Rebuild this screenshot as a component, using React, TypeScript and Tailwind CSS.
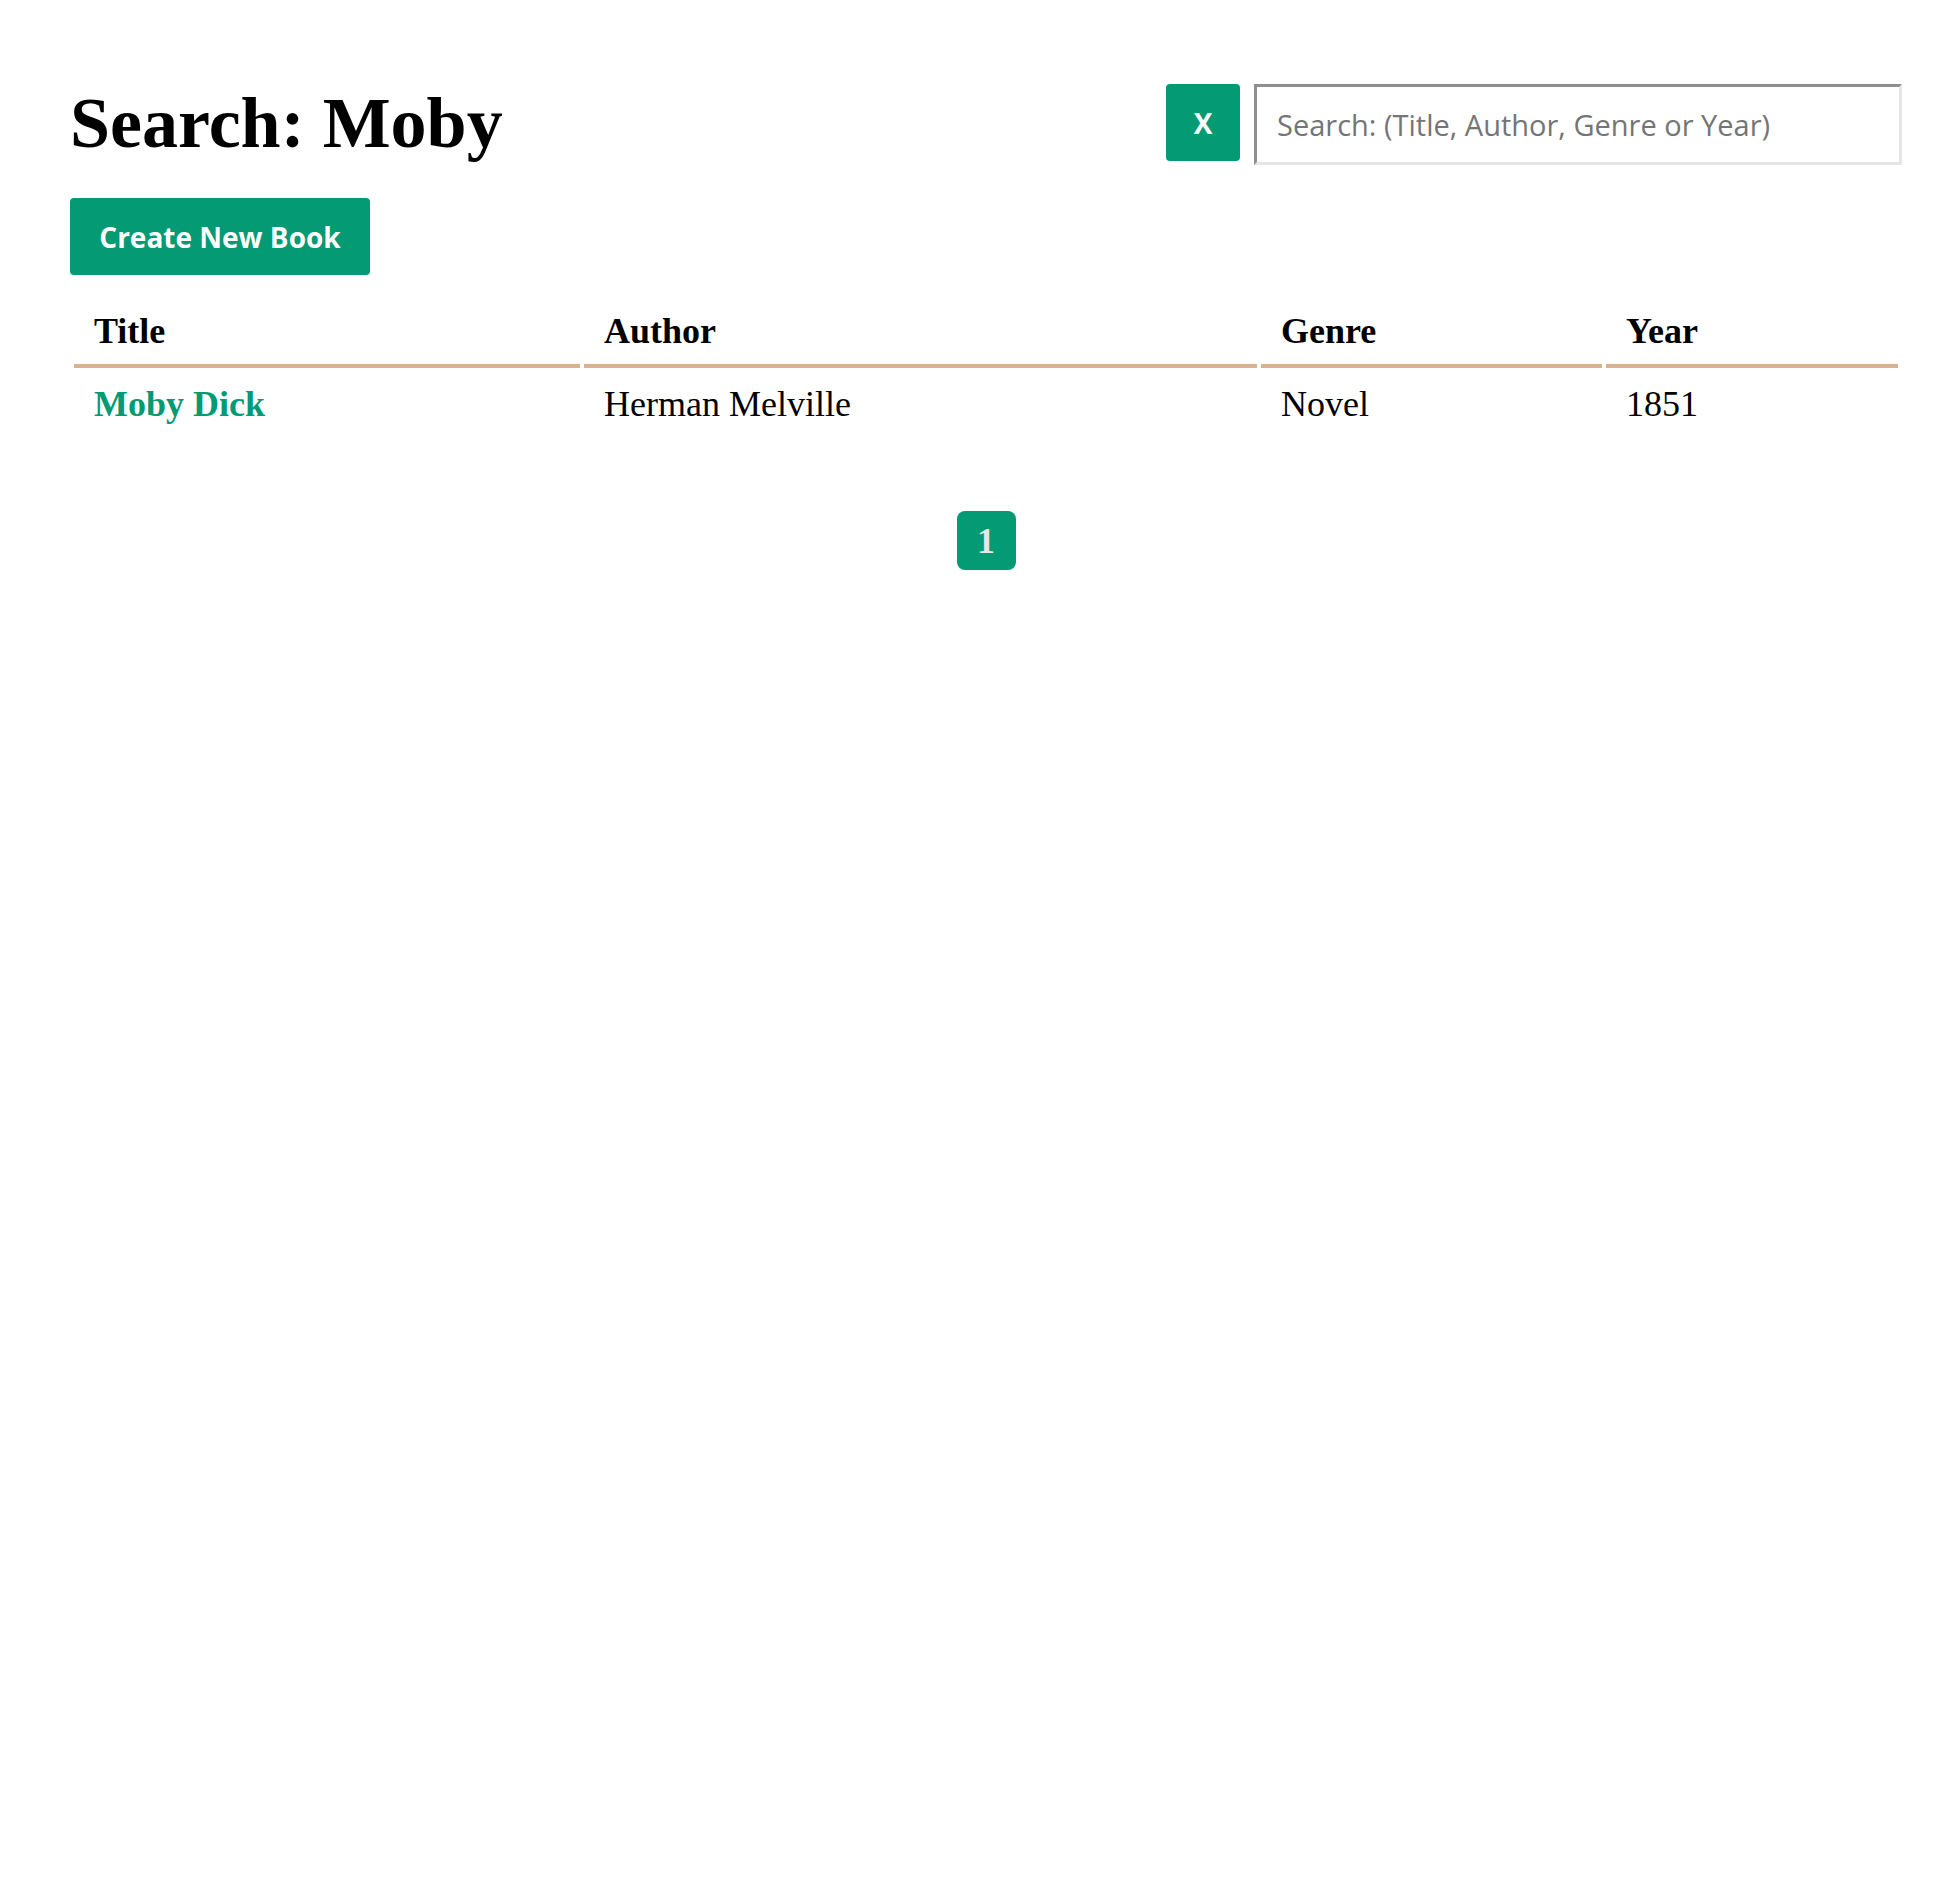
import { useState } from 'react'

const books = [{ title: 'Moby Dick', author: 'Herman Melville', genre: 'Novel', year: 1851 }]

export default function App() {
  const [query, setQuery] = useState('')

  return (
    <div className="min-h-screen bg-white pl-[70px] pr-[58px] pt-[84px] text-black font-['Liberation_Serif',serif]">
      <div className="flex items-start justify-between">
        <h1 className="mt-[3px] text-[72px] font-bold leading-[72px]">Search: Moby</h1>
        <form className="flex items-start gap-[14px]" onSubmit={(e) => e.preventDefault()}>
          <button
            type="button"
            className="flex h-[77px] w-[74px] items-center justify-center rounded-[4px] bg-[#039a74] text-[28px] font-bold text-white font-['Open_Sans',sans-serif]"
          >
            X
          </button>
          <input
            value={query}
            onChange={(e) => setQuery(e.target.value)}
            placeholder="Search: (Title, Author, Genre or Year)"
            className="h-[81px] w-[648px] border-[3px] border-t-[#8f8f8f] border-l-[#8f8f8f] border-r-[#e6e6e6] border-b-[#e6e6e6] bg-white px-[20px] text-[29px] text-black outline-none placeholder:text-[#757575] font-['Open_Sans',sans-serif]"
          />
        </form>
      </div>

      <button className="mt-[33px] flex h-[77px] w-[300px] items-center justify-center rounded-[4px] bg-[#039a74] text-[28px] font-bold text-white font-['Open_Sans',sans-serif]">
        Create New Book
      </button>

      <table className="mt-[20px] w-full table-fixed border-separate border-spacing-[4px] text-left text-[36px]">
        <colgroup>
          <col className="w-[506px]" />
          <col className="w-[673px]" />
          <col className="w-[341px]" />
          <col className="w-[292px]" />
        </colgroup>
        <thead>
          <tr>
            {['Title', 'Author', 'Genre', 'Year'].map((h) => (
              <th key={h} className="border-b-4 border-[#d8b48e] px-[20px] py-[12px] font-bold leading-[41px]">
                {h}
              </th>
            ))}
          </tr>
        </thead>
        <tbody>
          {books.map((b) => (
            <tr key={b.title}>
              <td className="px-[20px] py-[12px] leading-[41px]">
                <a href="#" className="font-bold text-[#039a74]">
                  {b.title}
                </a>
              </td>
              <td className="px-[20px] py-[12px] leading-[41px]">{b.author}</td>
              <td className="px-[20px] py-[12px] leading-[41px]">{b.genre}</td>
              <td className="px-[20px] py-[12px] leading-[41px]">{b.year}</td>
            </tr>
          ))}
        </tbody>
      </table>

      <div className="mt-[70px] flex justify-center">
        <button className="flex h-[59px] w-[59px] items-center justify-center rounded-[8px] bg-[#039a74] text-[36px] font-bold text-[#e6e6e6]">
          1
        </button>
      </div>
    </div>
  )
}
